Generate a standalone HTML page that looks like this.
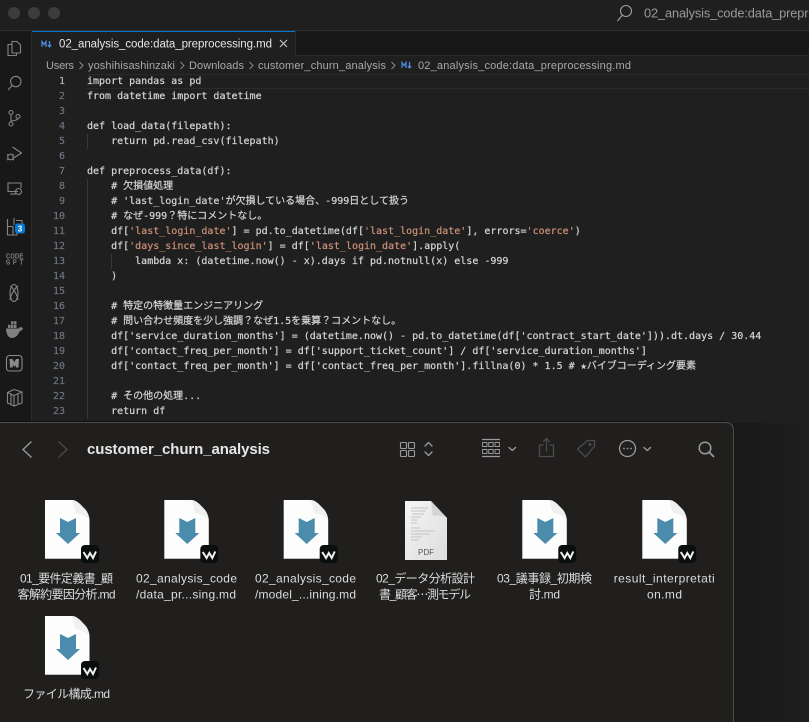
<!DOCTYPE html>
<html lang="ja"><head><meta charset="utf-8"><title>customer_churn_analysis</title>
<style>
html,body{margin:0;padding:0;width:809px;height:722px;overflow:hidden;background:#1f1f1f}
#wrap{position:relative;width:809px;height:722px;overflow:hidden;filter:blur(.3px)}
svg{position:absolute;left:0;top:0}
.code div{position:absolute;left:87px;height:15px;line-height:15px;white-space:pre;font:10px/15px "DejaVu Sans Mono","Noto Sans CJK JP",monospace;color:#d6d6d6;-webkit-text-stroke:.2px #d6d6d6}
.o{color:#ce9178;-webkit-text-stroke:.2px #ce9178}
.n{position:absolute;left:40px;width:25px;text-align:right;height:15px;font:10px/15px "DejaVu Sans Mono",monospace;color:#6e7681;-webkit-text-stroke:.15px #6e7681}
.ui{font-family:"Liberation Sans","Noto Sans CJK JP",sans-serif}
</style></head><body><div id="wrap">
<svg width="809" height="722" viewBox="0 0 809 722">
<rect width="809" height="722" fill="#1f1f1f"/>
<rect x="0" y="0" width="809" height="30" fill="#1f1f1f"/>
<rect x="0" y="30" width="809" height="1" fill="#2e2e2e"/>
<rect x="0" y="31" width="31" height="392" fill="#181818"/>
<rect x="31" y="31" width="1" height="392" fill="#2b2b2b"/>
<rect x="32" y="31" width="777" height="24" fill="#181818"/>
<rect x="32" y="55" width="777" height="1" fill="#2b2b2b"/>
<rect x="32" y="31" width="263" height="25" fill="#1f1f1f"/>
<rect x="32" y="31" width="263" height="1" fill="#0078d4"/>
<rect x="295" y="31" width="1" height="24" fill="#2b2b2b"/>
<circle cx="14" cy="13" r="6" fill="#3c3c3c"/><circle cx="34" cy="13" r="6" fill="#3c3c3c"/><circle cx="54" cy="13" r="6" fill="#3c3c3c"/>
<g fill="none" stroke="#a0a0a0" stroke-width="1.1"><circle cx="626" cy="11" r="5.5"/><path d="M622 15.500 L617.500 21"/></g>
<text x="644" y="17.500" class="ui" font-size="12.800" fill="#9a9a9a" textLength="214">02_analysis_code:data_preprocessing</text>
<!-- tab -->
<g fill="none" stroke="#4d8fe0" stroke-width="1.200"><path d="M42 47V41.500L44 44.500L46 41.500V47"/><path d="M49.500 41V46.500M47.800 45L49.500 47L51.200 45"/></g>
<text x="59" y="47.500" class="ui" font-size="11.500" fill="#e6e6e6" textLength="213">02_analysis_code:data_preprocessing.md</text>
<path d="M280 40L287 47M287 40L280 47" stroke="#c8c8c8" stroke-width="1.100"/>
<!-- breadcrumb -->
<g class="ui" font-size="11" fill="#a8a8a8">
<text x="46" y="69" textLength="28">Users</text>
<text x="88" y="69" textLength="87">yoshihisashinzaki</text>
<text x="189" y="69" textLength="55">Downloads</text>
<text x="258" y="69" textLength="128">customer_churn_analysis</text>
<text x="418" y="69" textLength="213">02_analysis_code:data_preprocessing.md</text>
</g>
<g fill="none" stroke="#8a8a8a" stroke-width="1"><path d="M79.500 62L83 65.500L79.500 69M180.500 62L184 65.500L180.500 69M249.500 62L253 65.500L249.500 69M391.500 62L395 65.500L391.500 69"/></g>
<g fill="none" stroke="#4d8fe0" stroke-width="1.200"><path d="M402 68V62.500L404 65.500L406 62.500V68"/><path d="M409.500 62V67.500M407.800 66L409.500 68L411.200 66"/></g>
<!-- current line -->
<path d="M87 74.500H809M87 88.500H809" stroke="#2a2a2a" stroke-width="1"/>
<!-- indent guides -->
<path d="M87.500 134V149M87.500 179V419M111.500 254V269" stroke="#383838" stroke-width="1"/>
<!-- activity icons -->
<g fill="none" stroke="#858585" stroke-width="1.100" stroke-linejoin="round">
<path d="M12 41.500H17L20.500 45V53H12Z M12 44.500H8V55.500H16.500V53"/>
<circle cx="15.800" cy="81.500" r="5.200"/><path d="M12 85.500L8 90"/>
<circle cx="11" cy="112.500" r="2"/><circle cx="11" cy="124" r="2"/><circle cx="18" cy="116.500" r="2"/><path d="M11 114.500V122M11 121C15 120.500 17.500 120 18 118.500"/>
<path d="M12.500 147L21.500 153L13.500 158"/><circle cx="10.500" cy="157" r="2.800"/><path d="M7 154.500L8.500 155.500M14 154.500L12.500 155.500M7 160L8.500 159M14 160L12.500 159"/>
<path d="M18 191.500H8V183H21V188"/><path d="M10 194H16"/><circle cx="18.500" cy="191.500" r="3"/>
<path d="M16 220.500H22V226"/><path d="M7.500 219V235H17V230M7.500 226.500H13V235"/><path d="M14 218V225"/>
<ellipse cx="14" cy="293" rx="4" ry="8.500"/><path d="M10.500 286C13 288 18 296 18 300M18 286C15 288 10 296 10 300"/>
<rect x="6.500" y="355.500" width="15.500" height="15.500" rx="3" stroke="#8a8a8a"/>
<path d="M7.500 392.500L14 389.500L22 392L22 403L14 406L7.500 403Z M7.500 392.500L14 395.500L22 392M14 395.500V406M11 394V405M18 394V404"/>
</g>
<text x="6" y="258.500" font-family="Liberation Mono, monospace" font-size="7" fill="#808080" stroke="#808080" stroke-width=".2" textLength="17.500">CODE</text>
<text x="6" y="264.500" font-family="Liberation Mono, monospace" font-size="7" fill="#808080" stroke="#808080" stroke-width=".2" textLength="17.500">GPT</text>
<path d="M6 328.500H18.500C19 327 21.500 326.500 23 328.500C22 330.500 20.500 331 19.500 331.500C18 335.500 15 338 12 338C8.500 338 6 334 6 328.500Z M8 328V324.800H10.500V328ZM11 328V324.800H13.500V328ZM14 328V324.800H16.500V328ZM11 324.300V321.300H13.500V324.300ZM14 324.300V321.300H16.500V324.300Z" fill="#808080"/>
<path d="M9.500 359H12.500L14.300 362L16 359H19L18.500 367.500H16L15.500 365L14.300 367L13 365L12.500 367.500H10Z" fill="#8a8a8a"/>
<rect x="15" y="223.500" width="10" height="10" rx="2.500" fill="#0a78d6"/>
<text x="20" y="231.500" class="ui" font-size="8" font-weight="bold" fill="#fff" text-anchor="middle">3</text>
</svg>
<div class="code">
<div style="top:74px">import pandas as pd</div>
<div style="top:89px">from datetime import datetime</div>
<div style="top:119px">def load_data(filepath):</div>
<div style="top:134px">    return pd.read_csv(filepath)</div>
<div style="top:164px">def preprocess_data(df):</div>
<div style="top:179px">    # 欠損値処理</div>
<div style="top:194px">    # 'last_login_date'が欠損している場合、-999日として扱う</div>
<div style="top:209px">    # なぜ-999？特にコメントなし。</div>
<div style="top:224px">    df[<span class="o">'last_login_date'</span>] = pd.to_datetime(df[<span class="o">'last_login_date'</span>], errors=<span class="o">'coerce'</span>)</div>
<div style="top:239px">    df[<span class="o">'days_since_last_login'</span>] = df[<span class="o">'last_login_date'</span>].apply(</div>
<div style="top:254px">        lambda x: (datetime.now() - x).days if pd.notnull(x) else -999</div>
<div style="top:269px">    )</div>
<div style="top:299px">    # 特定の特徴量エンジニアリング</div>
<div style="top:314px">    # 問い合わせ頻度を少し強調？なぜ1.5を乗算？コメントなし。</div>
<div style="top:329px">    df['service_duration_months'] = (datetime.now() - pd.to_datetime(df['contract_start_date'])).dt.days / 30.44</div>
<div style="top:344px">    df['contact_freq_per_month'] = df['support_ticket_count'] / df['service_duration_months']</div>
<div style="top:359px">    df['contact_freq_per_month'] = df['contact_freq_per_month'].fillna(0) * 1.5 # ★バイブコーディング要素</div>
<div style="top:389px">    # その他の処理...</div>
<div style="top:404px">    return df</div>
</div>
<div class="n" style="top:74px;color:#cccccc">1</div><div class="n" style="top:89px">2</div><div class="n" style="top:104px">3</div><div class="n" style="top:119px">4</div><div class="n" style="top:134px">5</div><div class="n" style="top:149px">6</div><div class="n" style="top:164px">7</div><div class="n" style="top:179px">8</div><div class="n" style="top:194px">9</div><div class="n" style="top:209px">10</div><div class="n" style="top:224px">11</div><div class="n" style="top:239px">12</div><div class="n" style="top:254px">13</div><div class="n" style="top:269px">14</div><div class="n" style="top:284px">15</div><div class="n" style="top:299px">16</div><div class="n" style="top:314px">17</div><div class="n" style="top:329px">18</div><div class="n" style="top:344px">19</div><div class="n" style="top:359px">20</div><div class="n" style="top:374px">21</div><div class="n" style="top:389px">22</div><div class="n" style="top:404px">23</div>
<svg width="809" height="722" viewBox="0 0 809 722">
<defs>
<linearGradient id="sh" x1="0" x2="1"><stop offset="0" stop-color="#191919"/><stop offset="1" stop-color="#1e1e1e"/></linearGradient>
<linearGradient id="pdf" x1="0" y1="0" x2="1" y2="1"><stop offset="0" stop-color="#f5f5f5"/><stop offset="1" stop-color="#dddddd"/></linearGradient>
<symbol id="doc" width="60" height="70" viewBox="0 0 60 70" overflow="visible">
<path d="M0 0H26C30 0 33 2 36 5L41 11C43.500 14 44.500 17 44.500 22V59H0Z" fill="#fdfdfd"/>
<path d="M27 0C29 6 30 12 31 13C36 14 41 16 44.500 20C44 15 42 11 40 9L35 4C32 1.500 30 0 27 0Z" fill="#f0f0f0"/>
<path d="M0 58.500H44.500" stroke="#bdbdbd" stroke-width="1"/>
<path d="M15 18L23 22L31 18V33H35L23 44L11 33H15Z" fill="#4b8bab"/>
<rect x="36" y="45" width="18" height="18" rx="4" fill="#0b0e0e"/>
<path d="M38.500 52L42.300 58L45 53L48 58L51 51.500" fill="none" stroke="#f2f2f2" stroke-width="2"/>
</symbol>
</defs>
<rect x="734" y="423" width="75" height="299" fill="url(#sh)"/>
<path d="M-5 422.500H725Q733.500 422.500 733.500 431V730H-5Z" fill="#201f1e" stroke="#4d4d4d" stroke-width="1"/>
<rect x="0" y="421" width="726" height="1" fill="#0f0f0f"/>
<g fill="none" stroke="#9a9a9a" stroke-width="1.300" stroke-linecap="round" stroke-linejoin="round">
<path d="M31 442L23 449.500L31 457" stroke-width="1.400"/>
<path d="M59 442L67 449.500L59 457" stroke="#4a4a4a" stroke-width="1.400"/>
<g stroke-width="1.100"><rect x="400.500" y="442.500" width="6" height="6" rx="1"/><rect x="408.500" y="442.500" width="6" height="6" rx="1"/><rect x="400.500" y="450.500" width="6" height="6" rx="1"/><rect x="408.500" y="450.500" width="6" height="6" rx="1"/></g>
<path d="M425 446L428.500 442.500L432 446M425 452L428.500 455.500L432 452"/>
<path d="M482 439.500H500M482 456.500H500" stroke-linecap="butt"/>
<g stroke-width=".9"><rect x="482.500" y="442.500" width="4.500" height="4"/><rect x="488.700" y="442.500" width="4.500" height="4"/><rect x="495" y="442.500" width="4.500" height="4"/><rect x="482.500" y="449.500" width="4.500" height="4"/><rect x="488.700" y="449.500" width="4.500" height="4"/><rect x="495" y="449.500" width="4.500" height="4"/></g>
<path d="M509 447.500L512.300 450.500L515.500 447.500M644 447.500L647.300 450.500L650.500 447.500"/>
<g stroke="#4c4c4c"><path d="M543 445H539.500V456.500H553.500V445H550M546.500 451V439M543.500 441.500L546.500 438.500L549.500 441.500"/>
<path d="M577.500 449L587.500 440.500H594.500V446L585.500 457Z"/><circle cx="590" cy="444.500" r=".8"/></g>
<circle cx="627.500" cy="448.500" r="8"/>
<circle cx="705" cy="448" r="5.800" stroke-width="1.500"/><path d="M709.500 452.500L713.500 456.500" stroke-width="1.700"/>
</g>
<circle cx="624" cy="448.500" r=".9" fill="#9a9a9a"/><circle cx="627.500" cy="448.500" r=".9" fill="#9a9a9a"/><circle cx="631" cy="448.500" r=".9" fill="#9a9a9a"/>
<text x="87" y="454" class="ui" font-size="15" font-weight="bold" fill="#e6e6e6" textLength="183">customer_churn_analysis</text>
<use href="#doc" x="45" y="500"/><use href="#doc" x="164.300" y="500"/><use href="#doc" x="283.700" y="500"/><use href="#doc" x="522.300" y="500"/><use href="#doc" x="642.300" y="500"/><use href="#doc" x="45" y="616"/>
<path d="M405 501H431L447 518V560H405Z" fill="url(#pdf)"/>
<path d="M431 501L447 518C442 515 436 515 433 516C432 512 432 506 431 501Z" fill="#d4d4d4"/>
<path d="M411 508H428M411 511H426M412 514H424M411 517H421M411 520H418M411 523H417M411 528H420M411 531H435M411 534H430M411 537H422M411 540H419" stroke="#b5b5b5" stroke-width=".8"/>
<text x="426" y="555" class="ui" font-size="8" fill="#555" text-anchor="middle" textLength="16">PDF</text>
<g class="ui" font-size="12" fill="#dcdcdc">
<text x="20" y="582.500" textLength="93">01_要件定義書_顧</text>
<text x="17.500" y="598.500" textLength="98">客解約要因分析.md</text>
<text x="136" y="582.500" textLength="101">02_analysis_code</text>
<text x="136" y="598.500" textLength="100">/data_pr...sing.md</text>
<text x="255" y="582.500" textLength="101">02_analysis_code</text>
<text x="255" y="598.500" textLength="101">/model_...ining.md</text>
<text x="376" y="582.500" textLength="99">02_データ分析設計</text>
<text x="379" y="598.500" textLength="92">書_顧客<tspan font-family="Noto Sans CJK JP">…</tspan>測モデル</text>
<text x="497" y="582.500" textLength="95">03_議事録_初期検</text>
<text x="529" y="598.500" textLength="31">討.md</text>
<text x="613.700" y="582.500" textLength="101">result_interpretati</text>
<text x="647" y="598.500" textLength="35">on.md</text>
<text x="23" y="698" textLength="87">ファイル構成.md</text>
</g>
</svg>
</div></body></html>
